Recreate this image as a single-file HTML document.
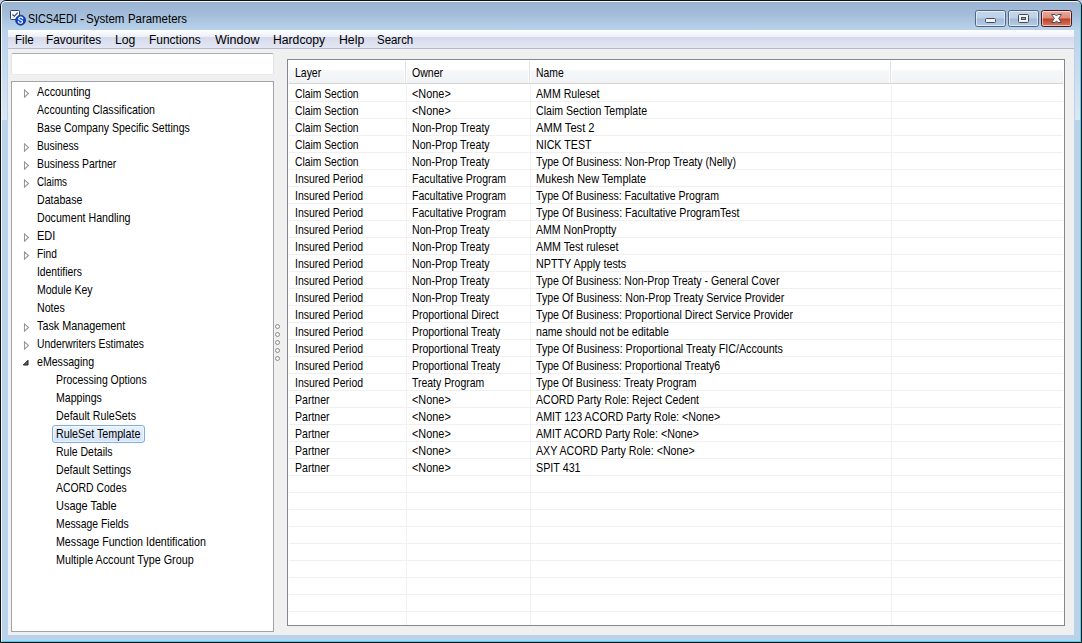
<!DOCTYPE html>
<html><head><meta charset="utf-8"><title>SICS4EDI - System Parameters</title>
<style>
html,body{margin:0;padding:0;}
body{width:1082px;height:643px;overflow:hidden;background:#000;font-family:"Liberation Sans",sans-serif;}
#win{position:absolute;left:0;top:0;width:1082px;height:643px;overflow:hidden;background:#b9d1ea;}
#frame{position:absolute;left:0;top:0;width:1080px;height:641px;border:1px solid #111;border-radius:6px 6px 0 0;background:#bad2ea;overflow:hidden;}
#titlegrad{position:absolute;left:0;top:0;width:1080px;height:29px;background:linear-gradient(#98b3d2 0%,#a3bcd9 45%,#b9d3ec 100%);}
#inner{position:absolute;left:0;top:0;width:1078px;height:639px;border:1px solid #f2f7fc;border-radius:5px 5px 0 0;border-right-color:#3fd7f5;border-bottom-color:#3fd7f5;}
#title{transform-origin:0 0;position:absolute;left:30px;top:12px;font-size:12px;line-height:15px;color:#000;white-space:nowrap;}
#client{position:absolute;left:8px;top:30px;width:1066px;height:605px;background:#f0f0f0;}
#menubar{position:absolute;left:8px;top:30px;width:1066px;height:18px;background:linear-gradient(#ffffff 0px,#f7f8fc 3px,#eceef7 7px,#d5d9ec 7px,#dde1f0 13px,#e4e8f5 18px);border-bottom:1px solid #b4b9cb;}
.mi{transform-origin:0 0;position:absolute;top:2px;font-size:12px;line-height:16px;color:#000;white-space:nowrap;}
#search{position:absolute;left:11px;top:53px;width:261px;height:20px;background:#fff;border:1px solid #dfe3ea;border-top-color:#abadb3;border-bottom-color:#e3e9ef;border-radius:2px;}
#tree{position:absolute;left:11px;top:81px;width:261px;height:549px;background:#fff;border:1px solid #a0a3aa;}
.tr{position:absolute;left:0;height:18px;width:260px;font-size:12.4px;line-height:18px;white-space:nowrap;color:#000;}
.tr .tt{position:absolute;top:0;left:25px;transform-origin:0 0;}
.tr.l1 .tt{left:44px;}
.tr .g{position:absolute;left:11px;top:6px;}
.tr .g.go{top:6px;left:10px;}
.selbox{position:absolute;left:40px;top:0;width:91px;height:16px;border:1px solid #84acdd;border-radius:3px;background:linear-gradient(#e9f2fd,#d1e3fb);box-shadow:inset 0 0 0 1px rgba(255,255,255,.55);}
#grip{position:absolute;left:275px;top:324px;width:5px;}
#grip i{display:block;width:3px;height:3px;border:1px solid #8a8a8a;border-radius:50%;margin-bottom:3px;background:#f6f6f6;}
#list{position:absolute;left:287px;top:59px;width:776px;height:565px;background:#fff;border:1px solid #828790;overflow:hidden;}
#hdr{position:absolute;left:1px;top:0px;height:23px;width:774px;background:linear-gradient(#fff 0px,#fff 10px,#f7f8fa 10px,#f1f2f4 23px);border-bottom:1px solid #d5d5d5;}
.hc{position:absolute;top:0;height:23px;box-sizing:border-box;font-size:12.4px;line-height:25px;}
.hc b{font-weight:normal;position:absolute;left:6px;transform-origin:0 0;top:1px;}
.hc::after{content:'';position:absolute;right:0;top:1px;bottom:0;width:1px;background:#dfe2e7;box-shadow:1px 0 0 rgba(255,255,255,.8),-1px 0 0 rgba(255,255,255,.8);}
.hc.last::after{display:none;}
#grid{position:absolute;left:1px;top:25px;width:774px;height:540px;
 background:
  linear-gradient(90deg,transparent 117px,#f0f0f0 117px,#f0f0f0 118px,transparent 118px,transparent 241px,#f0f0f0 241px,#f0f0f0 242px,transparent 242px,transparent 602px,#f0f0f0 602px,#f0f0f0 603px,transparent 603px),
  repeating-linear-gradient(180deg,transparent 0,transparent 16px,#f0f0f0 16px,#f0f0f0 17px);}
.r{position:absolute;left:0px;height:17px;width:776px;font-size:12.4px;line-height:19px;white-space:nowrap;color:#000;}
.c{position:absolute;top:0;transform-origin:0 0;}
.c1{left:7px}.c2{left:124px}.c3{left:248px}

#appicon{position:absolute;left:9px;top:9px;}
.side{position:absolute;top:29px;width:5px;height:91px;background:linear-gradient(#b9d3ec,#dae7f5);}
.cb{position:absolute;top:10px;width:29px;height:15px;border:1px solid #53647f;border-radius:2.5px;background:linear-gradient(#c3d6eb 0,#bcd1e8 7px,#a2bbd9 8px,#b4cce7 15px);}
.cb .hi{position:absolute;left:0;top:0;width:27px;height:13px;border:1px solid rgba(255,255,255,.55);border-radius:1.5px;}
#bmin{left:975px}#bmax{left:1008px}
#bclose{left:1041px;border-color:#471520;background:linear-gradient(#e9ab9c 0,#dd8c7a 7px,#bd4024 8px,#d87a63 15px);}
.gmin{position:absolute;left:9px;top:7px;width:9px;height:3px;background:#f3f3f1;border:1px solid #424a5c;border-radius:1.5px;}
.gmax{position:absolute;left:9px;top:3px;width:9px;height:7px;background:#f3f3f1;border:1px solid #424a5c;border-radius:1.5px;}
.gmax i{position:absolute;left:2px;top:2px;width:3px;height:1px;border:1px solid #424a5c;background:#8fb0d8;}

.tw{position:absolute;top:0;transform-origin:0 0;}

</style></head>
<body>
<div id="win">
<div id="frame"><div id="titlegrad"></div><div id="inner"></div></div>
<i class="side" style="left:2px"></i><i class="side" style="left:1075px"></i>
<svg id="appicon" width="18" height="18" viewBox="0 0 18 18">
 <defs><radialGradient id="bg" cx="45%" cy="40%" r="65%"><stop offset="0" stop-color="#1a5ee6"/><stop offset=".6" stop-color="#0a44c8"/><stop offset="1" stop-color="#062a94"/></radialGradient></defs>
 <rect x="1.5" y="1.5" width="9" height="9" rx=".8" fill="#f6f9fd" stroke="#34426f" stroke-width="1"/>
 <path d="M2.4 8.6 H6.5 L9.6 6.4 V9.6 H2.4 Z" fill="#d3e6f6"/>
 <path d="M3.5 5.5 L5.3 7.3 L8.7 3.7" fill="none" stroke="#2f3a6e" stroke-width="1.15"/>
 <circle cx="11.6" cy="11.2" r="5" fill="url(#bg)" stroke="#1b2f7c" stroke-width=".7"/>
 <path d="M13.7 9.7 C13.5 8.3 11.9 8 10.9 8.3 C9.5 8.7 9.4 10.3 10.6 10.8 L12.6 11.5 C14 12.1 13.7 13.9 12.1 14.2 C10.7 14.4 9.5 14 9.3 12.7" fill="none" stroke="#fff" stroke-width="1.2" stroke-linecap="round"/>
</svg>
<div id="title"><span id="tw0" class="tw" style="left:-1.55px;transform:scaleX(0.8896);">SICS4EDI</span><span id="tw1" class="tw" style="left:49.56px;transform:scaleX(1.0703);">-</span><span id="tw2" class="tw" style="left:56.46px;transform:scaleX(0.9612);">System</span><span id="tw3" class="tw" style="left:97.65px;transform:scaleX(0.9512);">Parameters</span></div>
<div class="cb" id="bmin"><i class="hi"></i><i class="gmin"></i></div>
<div class="cb" id="bmax"><i class="hi"></i><i class="gmax"><i></i></i></div>
<div class="cb" id="bclose"><i class="hi"></i>
 <svg width="11" height="9" viewBox="0 0 11 9" style="position:absolute;left:9px;top:3px"><path d="M0.5 0.5 H4.2 L5.5 2.1 L6.8 0.5 H10.5 L7.6 4.5 L10.5 8.5 H6.8 L5.5 6.9 L4.2 8.5 H0.5 L3.4 4.5 Z" fill="#fff" stroke="#4a4f63" stroke-width="1" stroke-linejoin="round"/></svg>
</div>
<div id="client"></div>
<div id="menubar"><span id="m0" class="mi" style="left:7px;transform:scaleX(0.9688);">File</span><span id="m1" class="mi" style="left:38px;transform:scaleX(0.9835);">Favourites</span><span id="m2" class="mi" style="left:107px;transform:scaleX(1.0193);">Log</span><span id="m3" class="mi" style="left:141px;transform:scaleX(0.9965);">Functions</span><span id="m4" class="mi" style="left:207px;transform:scaleX(1.0407);">Window</span><span id="m5" class="mi" style="left:265px;transform:scaleX(1.0149);">Hardcopy</span><span id="m6" class="mi" style="left:331px;transform:scaleX(1.0230);">Help</span><span id="m7" class="mi" style="left:369px;transform:scaleX(0.9528);">Search</span></div>
<div id="search"></div>
<div id="tree">
<div class="tr l0" style="top:1px"><svg class="g" width="7" height="9" viewBox="0 0 7 9"><path d="M1.5 0.8 L5.5 4.5 L1.5 8.2 Z" fill="#fff" stroke="#989898" stroke-width="1.1"/></svg><span id="t0" class="tt" style="transform:scaleX(0.8744);">Accounting</span></div>
<div class="tr l0" style="top:19px"><span id="t1" class="tt" style="transform:scaleX(0.8564);">Accounting Classification</span></div>
<div class="tr l0" style="top:37px"><span id="t2" class="tt" style="transform:scaleX(0.8501);">Base Company Specific Settings</span></div>
<div class="tr l0" style="top:55px"><svg class="g" width="7" height="9" viewBox="0 0 7 9"><path d="M1.5 0.8 L5.5 4.5 L1.5 8.2 Z" fill="#fff" stroke="#989898" stroke-width="1.1"/></svg><span id="t3" class="tt" style="transform:scaleX(0.8299);">Business</span></div>
<div class="tr l0" style="top:73px"><svg class="g" width="7" height="9" viewBox="0 0 7 9"><path d="M1.5 0.8 L5.5 4.5 L1.5 8.2 Z" fill="#fff" stroke="#989898" stroke-width="1.1"/></svg><span id="t4" class="tt" style="transform:scaleX(0.8398);">Business Partner</span></div>
<div class="tr l0" style="top:91px"><svg class="g" width="7" height="9" viewBox="0 0 7 9"><path d="M1.5 0.8 L5.5 4.5 L1.5 8.2 Z" fill="#fff" stroke="#989898" stroke-width="1.1"/></svg><span id="t5" class="tt" style="transform:scaleX(0.7925);">Claims</span></div>
<div class="tr l0" style="top:109px"><span id="t6" class="tt" style="transform:scaleX(0.8554);">Database</span></div>
<div class="tr l0" style="top:127px"><span id="t7" class="tt" style="transform:scaleX(0.8594);">Document Handling</span></div>
<div class="tr l0" style="top:145px"><svg class="g" width="7" height="9" viewBox="0 0 7 9"><path d="M1.5 0.8 L5.5 4.5 L1.5 8.2 Z" fill="#fff" stroke="#989898" stroke-width="1.1"/></svg><span id="t8" class="tt" style="transform:scaleX(0.8882);">EDI</span></div>
<div class="tr l0" style="top:163px"><svg class="g" width="7" height="9" viewBox="0 0 7 9"><path d="M1.5 0.8 L5.5 4.5 L1.5 8.2 Z" fill="#fff" stroke="#989898" stroke-width="1.1"/></svg><span id="t9" class="tt" style="transform:scaleX(0.8223);">Find</span></div>
<div class="tr l0" style="top:181px"><span id="t10" class="tt" style="transform:scaleX(0.8339);">Identifiers</span></div>
<div class="tr l0" style="top:199px"><span id="t11" class="tt" style="transform:scaleX(0.8492);">Module Key</span></div>
<div class="tr l0" style="top:217px"><span id="t12" class="tt" style="transform:scaleX(0.8597);">Notes</span></div>
<div class="tr l0" style="top:235px"><svg class="g" width="7" height="9" viewBox="0 0 7 9"><path d="M1.5 0.8 L5.5 4.5 L1.5 8.2 Z" fill="#fff" stroke="#989898" stroke-width="1.1"/></svg><span id="t13" class="tt" style="transform:scaleX(0.8722);">Task Management</span></div>
<div class="tr l0" style="top:253px"><svg class="g" width="7" height="9" viewBox="0 0 7 9"><path d="M1.5 0.8 L5.5 4.5 L1.5 8.2 Z" fill="#fff" stroke="#989898" stroke-width="1.1"/></svg><span id="t14" class="tt" style="transform:scaleX(0.8353);">Underwriters Estimates</span></div>
<div class="tr l0" style="top:271px"><svg class="g go" width="7" height="7" viewBox="0 0 7 7"><path d="M6 1.3 L6 6 L1.3 6 Z" fill="#5e5e5e" stroke="#222" stroke-width="1" stroke-linejoin="round"/></svg><span id="t15" class="tt" style="transform:scaleX(0.8545);">eMessaging</span></div>
<div class="tr l1" style="top:289px"><span id="t16" class="tt" style="transform:scaleX(0.8433);">Processing Options</span></div>
<div class="tr l1" style="top:307px"><span id="t17" class="tt" style="transform:scaleX(0.8533);">Mappings</span></div>
<div class="tr l1" style="top:325px"><span id="t18" class="tt" style="transform:scaleX(0.8608);">Default RuleSets</span></div>
<div class="tr l1" style="top:343px"><i class="selbox"></i><span id="t19" class="tt" style="transform:scaleX(0.8650);">RuleSet Template</span></div>
<div class="tr l1" style="top:361px"><span id="t20" class="tt" style="transform:scaleX(0.8471);">Rule Details</span></div>
<div class="tr l1" style="top:379px"><span id="t21" class="tt" style="transform:scaleX(0.8575);">Default Settings</span></div>
<div class="tr l1" style="top:397px"><span id="t22" class="tt" style="transform:scaleX(0.8410);">ACORD Codes</span></div>
<div class="tr l1" style="top:415px"><span id="t23" class="tt" style="transform:scaleX(0.8833);">Usage Table</span></div>
<div class="tr l1" style="top:433px"><span id="t24" class="tt" style="transform:scaleX(0.8381);">Message Fields</span></div>
<div class="tr l1" style="top:451px"><span id="t25" class="tt" style="transform:scaleX(0.8598);">Message Function Identification</span></div>
<div class="tr l1" style="top:469px"><span id="t26" class="tt" style="transform:scaleX(0.8700);">Multiple Account Type Group</span></div>
</div>
<div id="grip"><i></i><i></i><i></i><i></i><i></i></div>
<div id="list">
<div id="hdr"><span class="hc" style="left:0;width:117px"><b id="h0" style="left:6px;transform:scaleX(0.8447);">Layer</b></span><span class="hc" style="left:117px;width:124px"><b id="h1" style="transform:scaleX(0.8530);">Owner</b></span><span class="hc" style="left:241px;width:361px"><b id="h2" style="transform:scaleX(0.8365);">Name</b></span><span class="hc last" style="left:602px;width:173px"></span></div>
<div id="grid"></div>
<div class="r" style="top:25px"><span id="a0" class="c c1" style="transform:scaleX(0.8320);">Claim Section</span><span id="b0" class="c c2" style="transform:scaleX(0.8788);">&lt;None&gt;</span><span id="n0" class="c c3" style="transform:scaleX(0.8546);">AMM Ruleset</span></div>
<div class="r" style="top:42px"><span id="a1" class="c c1" style="transform:scaleX(0.8320);">Claim Section</span><span id="b1" class="c c2" style="transform:scaleX(0.8788);">&lt;None&gt;</span><span id="n1" class="c c3" style="transform:scaleX(0.8546);">Claim Section Template</span></div>
<div class="r" style="top:59px"><span id="a2" class="c c1" style="transform:scaleX(0.8320);">Claim Section</span><span id="b2" class="c c2" style="transform:scaleX(0.8539);">Non-Prop Treaty</span><span id="n2" class="c c3" style="transform:scaleX(0.8984);">AMM Test 2</span></div>
<div class="r" style="top:76px"><span id="a3" class="c c1" style="transform:scaleX(0.8320);">Claim Section</span><span id="b3" class="c c2" style="transform:scaleX(0.8539);">Non-Prop Treaty</span><span id="n3" class="c c3" style="transform:scaleX(0.8608);">NICK TEST</span></div>
<div class="r" style="top:93px"><span id="a4" class="c c1" style="transform:scaleX(0.8320);">Claim Section</span><span id="b4" class="c c2" style="transform:scaleX(0.8539);">Non-Prop Treaty</span><span id="n4" class="c c3" style="transform:scaleX(0.8544);">Type Of Business: Non-Prop Treaty (Nelly)</span></div>
<div class="r" style="top:110px"><span id="a5" class="c c1" style="transform:scaleX(0.8444);">Insured Period</span><span id="b5" class="c c2" style="transform:scaleX(0.8491);">Facultative Program</span><span id="n5" class="c c3" style="transform:scaleX(0.8799);">Mukesh New Template</span></div>
<div class="r" style="top:127px"><span id="a6" class="c c1" style="transform:scaleX(0.8444);">Insured Period</span><span id="b6" class="c c2" style="transform:scaleX(0.8491);">Facultative Program</span><span id="n6" class="c c3" style="transform:scaleX(0.8515);">Type Of Business: Facultative Program</span></div>
<div class="r" style="top:144px"><span id="a7" class="c c1" style="transform:scaleX(0.8444);">Insured Period</span><span id="b7" class="c c2" style="transform:scaleX(0.8491);">Facultative Program</span><span id="n7" class="c c3" style="transform:scaleX(0.8565);">Type Of Business: Facultative ProgramTest</span></div>
<div class="r" style="top:161px"><span id="a8" class="c c1" style="transform:scaleX(0.8444);">Insured Period</span><span id="b8" class="c c2" style="transform:scaleX(0.8539);">Non-Prop Treaty</span><span id="n8" class="c c3" style="transform:scaleX(0.8521);">AMM NonProptty</span></div>
<div class="r" style="top:178px"><span id="a9" class="c c1" style="transform:scaleX(0.8444);">Insured Period</span><span id="b9" class="c c2" style="transform:scaleX(0.8539);">Non-Prop Treaty</span><span id="n9" class="c c3" style="transform:scaleX(0.8625);">AMM Test ruleset</span></div>
<div class="r" style="top:195px"><span id="a10" class="c c1" style="transform:scaleX(0.8444);">Insured Period</span><span id="b10" class="c c2" style="transform:scaleX(0.8539);">Non-Prop Treaty</span><span id="n10" class="c c3" style="transform:scaleX(0.8691);">NPTTY Apply tests</span></div>
<div class="r" style="top:212px"><span id="a11" class="c c1" style="transform:scaleX(0.8444);">Insured Period</span><span id="b11" class="c c2" style="transform:scaleX(0.8539);">Non-Prop Treaty</span><span id="n11" class="c c3" style="transform:scaleX(0.8497);">Type Of Business: Non-Prop Treaty - General Cover</span></div>
<div class="r" style="top:229px"><span id="a12" class="c c1" style="transform:scaleX(0.8444);">Insured Period</span><span id="b12" class="c c2" style="transform:scaleX(0.8539);">Non-Prop Treaty</span><span id="n12" class="c c3" style="transform:scaleX(0.8584);">Type Of Business: Non-Prop Treaty Service Provider</span></div>
<div class="r" style="top:246px"><span id="a13" class="c c1" style="transform:scaleX(0.8444);">Insured Period</span><span id="b13" class="c c2" style="transform:scaleX(0.8439);">Proportional Direct</span><span id="n13" class="c c3" style="transform:scaleX(0.8538);">Type Of Business: Proportional Direct Service Provider</span></div>
<div class="r" style="top:263px"><span id="a14" class="c c1" style="transform:scaleX(0.8444);">Insured Period</span><span id="b14" class="c c2" style="transform:scaleX(0.8440);">Proportional Treaty</span><span id="n14" class="c c3" style="transform:scaleX(0.8530);">name should not be editable</span></div>
<div class="r" style="top:280px"><span id="a15" class="c c1" style="transform:scaleX(0.8444);">Insured Period</span><span id="b15" class="c c2" style="transform:scaleX(0.8440);">Proportional Treaty</span><span id="n15" class="c c3" style="transform:scaleX(0.8618);">Type Of Business: Proportional Treaty FIC/Accounts</span></div>
<div class="r" style="top:297px"><span id="a16" class="c c1" style="transform:scaleX(0.8444);">Insured Period</span><span id="b16" class="c c2" style="transform:scaleX(0.8440);">Proportional Treaty</span><span id="n16" class="c c3" style="transform:scaleX(0.8546);">Type Of Business: Proportional Treaty6</span></div>
<div class="r" style="top:314px"><span id="a17" class="c c1" style="transform:scaleX(0.8444);">Insured Period</span><span id="b17" class="c c2" style="transform:scaleX(0.8433);">Treaty Program</span><span id="n17" class="c c3" style="transform:scaleX(0.8480);">Type Of Business: Treaty Program</span></div>
<div class="r" style="top:331px"><span id="a18" class="c c1" style="transform:scaleX(0.8510);">Partner</span><span id="b18" class="c c2" style="transform:scaleX(0.8788);">&lt;None&gt;</span><span id="n18" class="c c3" style="transform:scaleX(0.8511);">ACORD Party Role: Reject Cedent</span></div>
<div class="r" style="top:348px"><span id="a19" class="c c1" style="transform:scaleX(0.8510);">Partner</span><span id="b19" class="c c2" style="transform:scaleX(0.8788);">&lt;None&gt;</span><span id="n19" class="c c3" style="transform:scaleX(0.8634);">AMIT 123 ACORD Party Role: &lt;None&gt;</span></div>
<div class="r" style="top:365px"><span id="a20" class="c c1" style="transform:scaleX(0.8510);">Partner</span><span id="b20" class="c c2" style="transform:scaleX(0.8788);">&lt;None&gt;</span><span id="n20" class="c c3" style="transform:scaleX(0.8614);">AMIT ACORD Party Role: &lt;None&gt;</span></div>
<div class="r" style="top:382px"><span id="a21" class="c c1" style="transform:scaleX(0.8510);">Partner</span><span id="b21" class="c c2" style="transform:scaleX(0.8788);">&lt;None&gt;</span><span id="n21" class="c c3" style="transform:scaleX(0.8604);">AXY ACORD Party Role: &lt;None&gt;</span></div>
<div class="r" style="top:399px"><span id="a22" class="c c1" style="transform:scaleX(0.8510);">Partner</span><span id="b22" class="c c2" style="transform:scaleX(0.8788);">&lt;None&gt;</span><span id="n22" class="c c3" style="transform:scaleX(0.8670);">SPIT 431</span></div>
</div>
</div>
</body></html>
